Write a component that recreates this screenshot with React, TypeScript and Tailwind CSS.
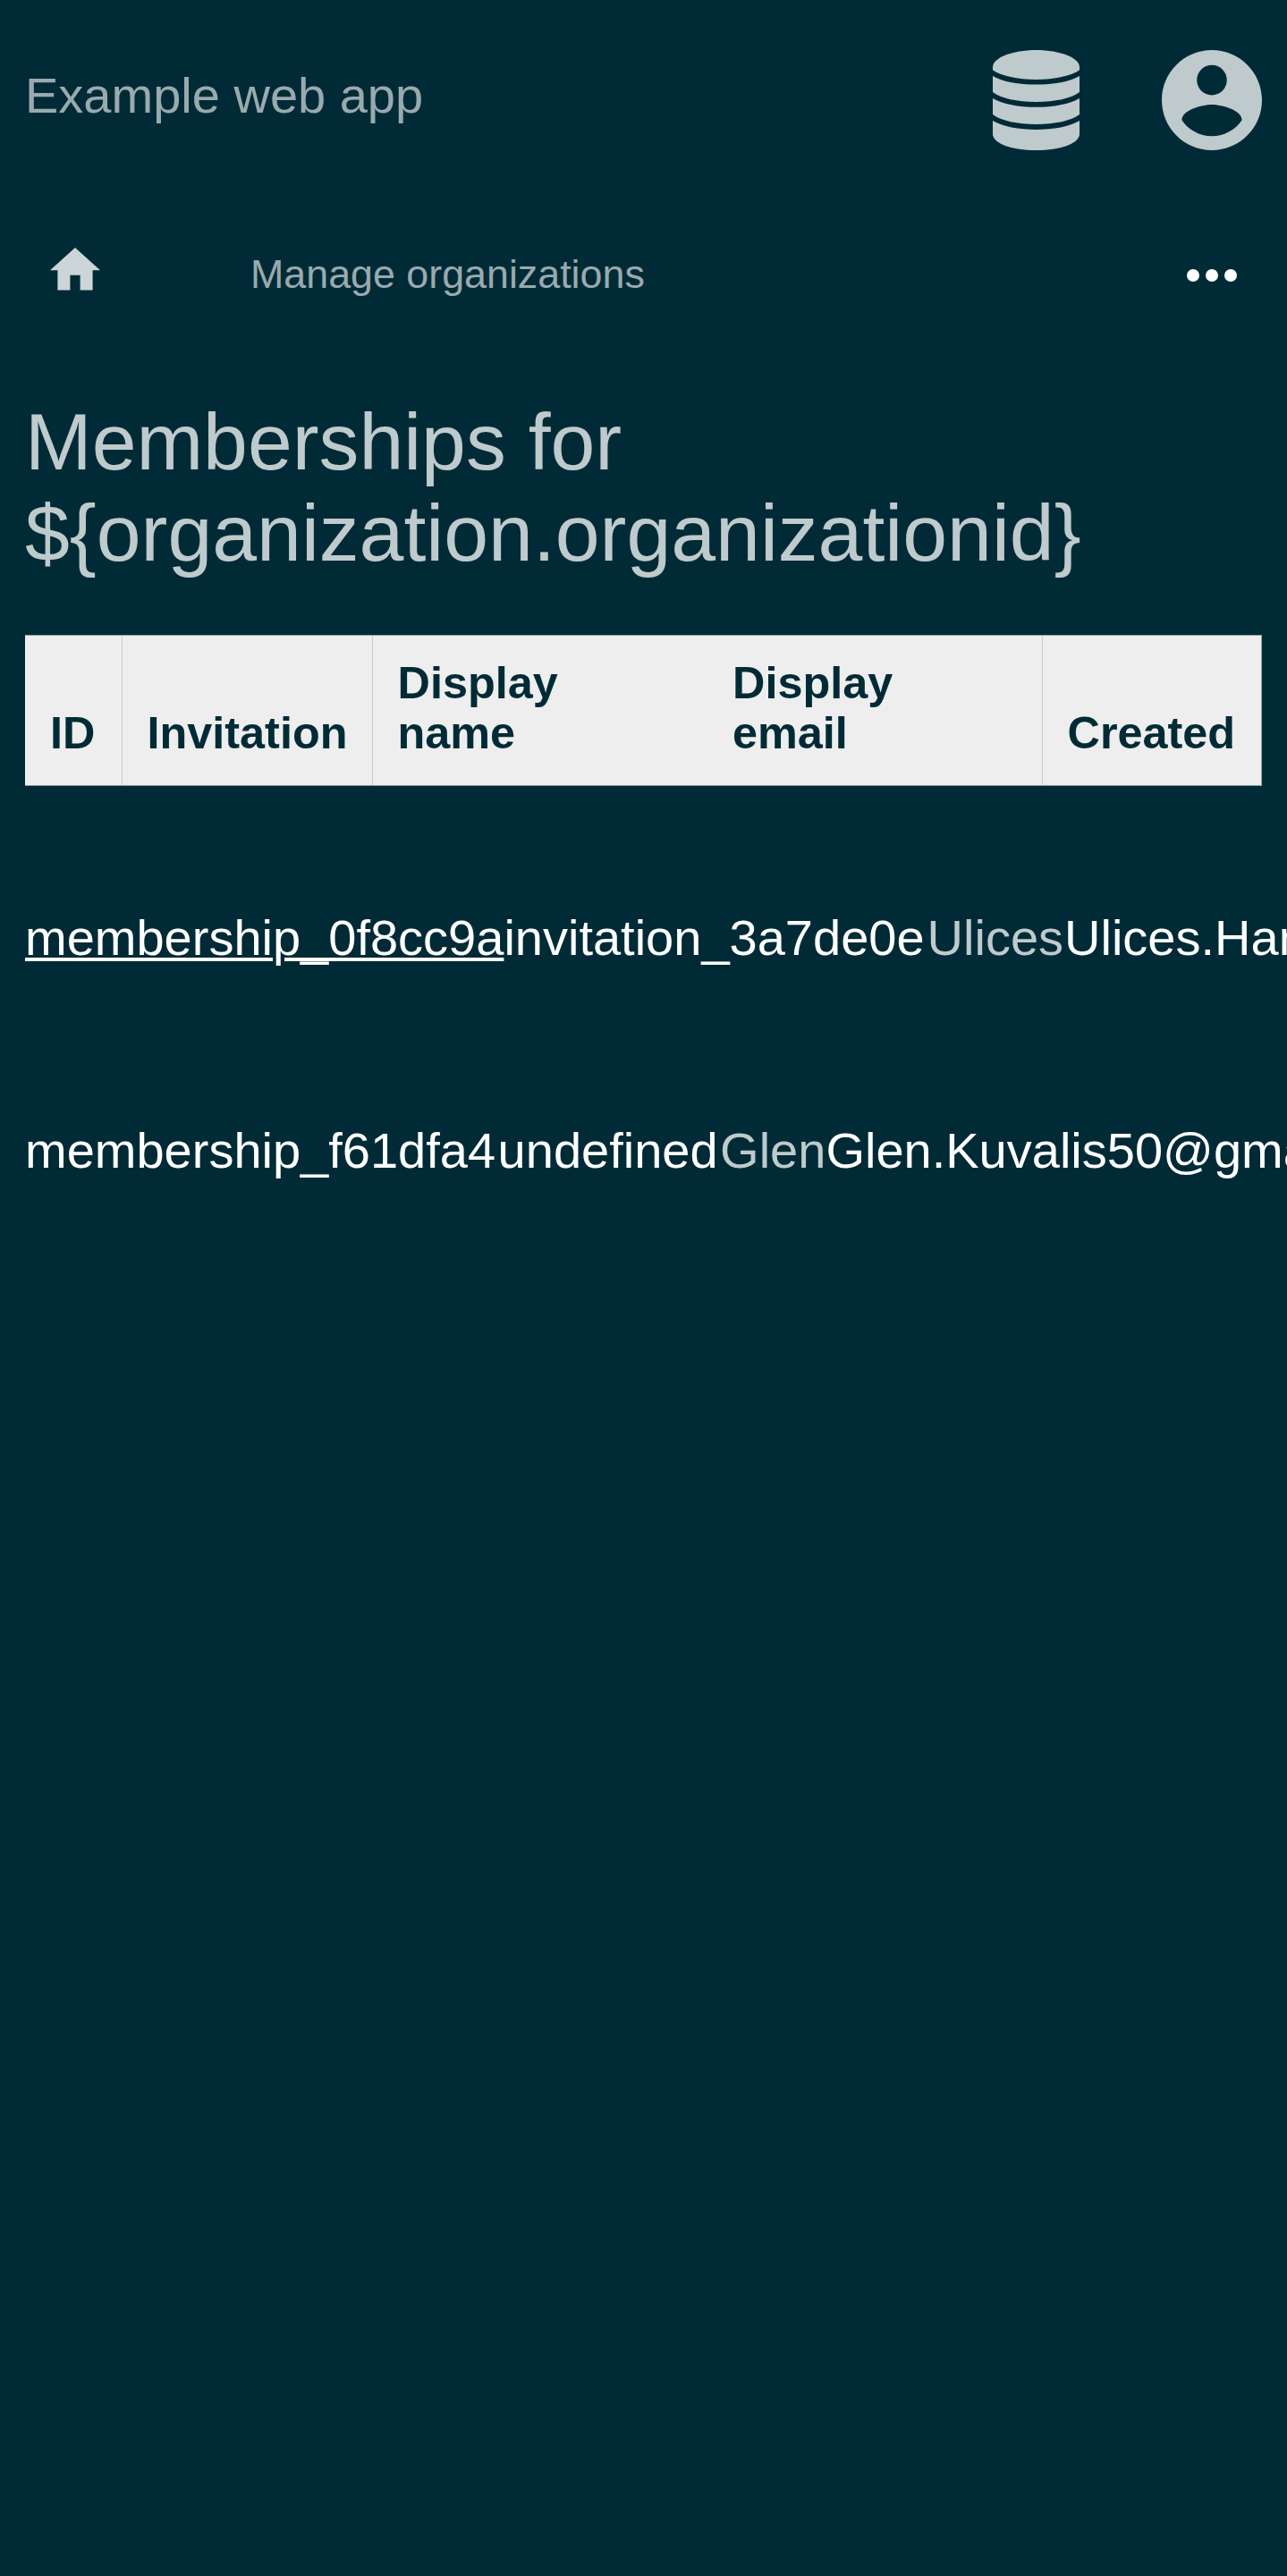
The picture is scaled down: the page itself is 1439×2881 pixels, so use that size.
import React from "react";

const headers = [
  { label: "ID", cell: "w-[108px] pl-7" },
  { label: "Invitation", cell: "w-[280px] border-l border-[#cbcbcb] pl-[27.500px]" },
  { label: "Display name", cell: "w-[374px] border-l border-[#cbcbcb] pl-[27.500px] pr-[120px]" },
  { label: "Display email", cell: "w-[375px] pl-[29px] pr-[120px]" },
  { label: "Created", cell: "flex-1 border-l border-[#cbcbcb] pl-[27.500px]" },
];

function DatabaseIcon() {
  return (
    <svg className="h-28 w-[97px]" viewBox="0 0 97 112" fill="#bfcacd">
      <path d="M48.500 0C76 0 97 9 97 19V22.300C88 29 69 33 48.500 33S9 29 0 22.300V19C0 9 21 0 48.500 0Z" />
      <path d="M0 29C11 35.500 29 38.600 48.500 38.600S86 35.500 97 29V47C88 54 69 58 48.500 58S9 54 0 47Z" />
      <path d="M0 54C11 60.500 29 63.800 48.500 63.800S86 60.500 97 54V72C88 79 69 83 48.500 83S9 79 0 72Z" />
      <path d="M0 79C11 85.500 29 89 48.500 89S86 85.500 97 79V95C95 105 76 112 48.500 112S2 105 0 95Z" />
    </svg>
  );
}

function AccountIcon() {
  return (
    <svg className="h-28 w-28" viewBox="2 2 20 20" fill="#bfcacd">
      <path d="M12 2C6.48 2 2 6.480 2 12s4.480 10 10 10 10-4.480 10-10S17.520 2 12 2zm0 3c1.660 0 3 1.340 3 3s-1.340 3-3 3-3-1.340-3-3 1.340-3 3-3zm0 14.200c-2.500 0-4.710-1.280-6-3.220.03-1.990 4-3.080 6-3.080 1.990 0 5.970 1.090 6 3.080-1.290 1.940-3.500 3.220-6 3.220z" />
    </svg>
  );
}

export default function App() {
  return (
    <div className="flex h-[2881px] w-full flex-col overflow-hidden bg-[#002b36] px-7 font-['Liberation_Sans',Arial,sans-serif] text-[56px] leading-[64px] text-white">
      <header className="mt-14 flex h-28 items-center justify-between">
        <span className="mt-[-10px] text-[#99aaaf]">Example web app</span>
        <div className="flex gap-[92px]">
          <DatabaseIcon />
          <AccountIcon />
        </div>
      </header>

      <nav className="mt-[84px] flex h-28 items-center px-7">
        <svg className="mt-[-14px] h-[47.600px] w-14" viewBox="2 3 20 17" fill="#ccd5d7">
          <path d="M10 20v-6h4v6h5v-8h3L12 3 2 12h3v8z" />
        </svg>
        <span className="mt-[-4px] ml-[168px] flex-1 text-[44.800px] text-[#99aaaf]">Manage organizations</span>
        <svg className="h-3.5 w-14" viewBox="0 0 56 14" fill="white">
          <circle cx="7" cy="7" r="7" />
          <circle cx="28" cy="7" r="7" />
          <circle cx="49" cy="7" r="7" />
        </svg>
      </nav>

      <h1 className="mt-[79px] text-[89.600px] leading-[102px] text-[#bfcacd]">
        Memberships for
        <br />
        {"${organization.organizationid}"}
      </h1>

      <div className="mt-[63px] flex h-[169px] shrink-0 border-y border-r border-[#91a1a4] bg-[#eee] text-[50.400px] leading-[56px] font-bold text-[#002b36]">
        {headers.map((h) => (
          <div key={h.label} className={`${h.cell} flex shrink-0 items-end pb-[30px]`}>
            {h.label}
          </div>
        ))}
      </div>

      <div className="mt-[138px] flex whitespace-nowrap">
        <a className="underline decoration-[3.5px] underline-offset-[3px]">membership_0f8cc9a</a>
        <span>invitation_3a7de0e</span>
        <span className="ml-[3px] text-[#bfcacd]">Ulices</span>
        <span className="ml-px">Ulices.Hane@gmail.com</span>
      </div>
      <div className="mt-[174px] flex whitespace-nowrap">
        <span>membership_f61dfa4</span>
        <span className="ml-[2.500px]">undefined</span>
        <span className="ml-[2.500px] text-[#bfcacd]">Glen</span>
        <span>Glen.Kuvalis50@gmail.com</span>
      </div>
    </div>
  );
}
